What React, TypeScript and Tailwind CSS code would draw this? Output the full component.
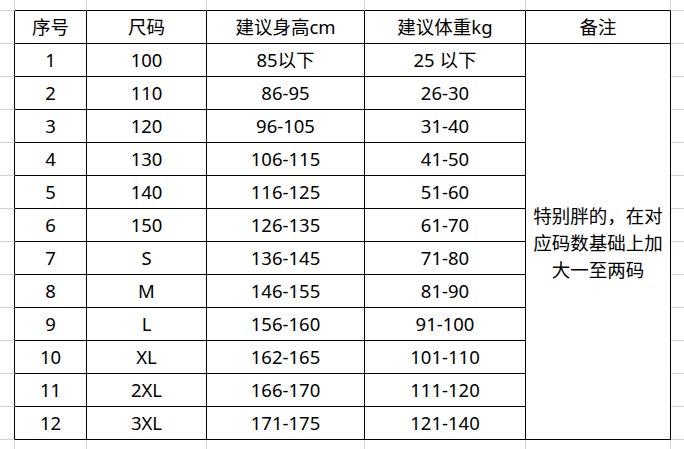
import React from "react";

const rows: string[][] = [
  ["1", "100", "85以下", "25 以下"],
  ["2", "110", "86-95", "26-30"],
  ["3", "120", "96-105", "31-40"],
  ["4", "130", "106-115", "41-50"],
  ["5", "140", "116-125", "51-60"],
  ["6", "150", "126-135", "61-70"],
  ["7", "S", "136-145", "71-80"],
  ["8", "M", "146-155", "81-90"],
  ["9", "L", "156-160", "91-100"],
  ["10", "XL", "162-165", "101-110"],
  ["11", "2XL", "166-170", "111-120"],
  ["12", "3XL", "171-175", "121-140"],
];

const headers = ["序号", "尺码", "建议身高cm", "建议体重kg", "备注"];

// table cells: black right + bottom borders
const cell = "flex items-center justify-center border-r border-b border-black";

function App() {
  return (
    <div
      className="w-[684px] h-[449px] overflow-hidden bg-white text-[18.5px] text-black leading-none"
      style={{ fontFamily: '"Noto Sans", "Noto Sans CJK SC", sans-serif' }}
    >
      <div className="grid grid-cols-[15px_72px_120px_158px_161px_145px_13px] grid-rows-[11px_repeat(13,33px)_9px]">
        {/* top margin row */}
        <div className="border-r border-b border-[#d4d4d4]" />
        {[0, 1, 2, 3, 4].map((i) => (
          <div key={"t" + i} className="border-r border-r-[#d4d4d4] border-b border-b-black" />
        ))}
        <div className="border-b border-[#d4d4d4]" />

        {/* header row */}
        <div className="border-r border-r-black border-b border-b-[#d4d4d4]" />
        {headers.map((h) => (
          <div key={h} className={cell}>
            {h}
          </div>
        ))}
        <div className="border-b border-[#d4d4d4]" />

        {/* data rows */}
        {rows.map((r, ri) => (
          <React.Fragment key={ri}>
            <div className="border-r border-r-black border-b border-b-[#d4d4d4]" />
            {r.map((v, ci) => (
              <div key={ci} className={cell}>
                {v}
              </div>
            ))}
            {ri === 0 && (
              <div className={cell + " row-span-12 flex-col leading-[27px] pt-[2px]"}>
                <span>特别胖的，在对</span>
                <span>应码数基础上加</span>
                <span>大一至两码</span>
              </div>
            )}
            <div className="border-b border-[#d4d4d4]" />
          </React.Fragment>
        ))}

        {/* bottom margin row */}
        <div className="border-r border-[#d4d4d4]" />
        {[0, 1, 2, 3, 4].map((i) => (
          <div key={"b" + i} className="border-r border-[#d4d4d4]" />
        ))}
        <div />
      </div>
    </div>
  );
}

export default App;
